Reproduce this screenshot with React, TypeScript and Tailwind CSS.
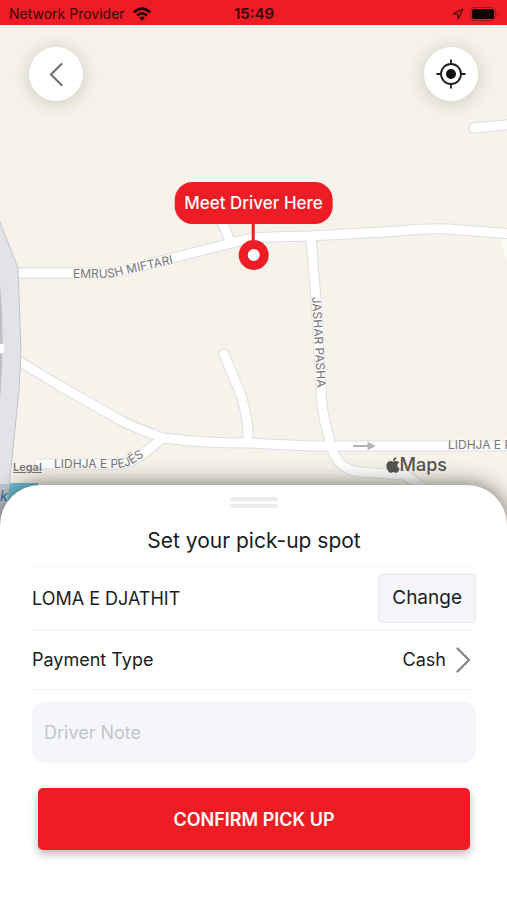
import type React from "react";
import { FaApple } from "react-icons/fa";

interface Road {
  id: string;
  d: string;
}

interface RoundButtonProps {
  label: string;
  children: React.ReactNode;
}

const roads: Road[] = [
  { id: "emrush", d: "M10 273H105Q114 273 122 271L200 251L232 243Q250 237 270 237L310 236L400 231Q437 227 460 230L515 234" },
  { id: "emrush-stub", d: "M221 220L231 243" },
  { id: "jashar", d: "M311 237L316 300L321 385Q321 410 327 430L331 446Q338 470 360 472L405 475L426 490" },
  { id: "west", d: "M10 356L60 386L120 420Q128 425 163 438Q200 443 250 443L310 446H515" },
  { id: "lidhja", d: "M163 438L139 457Q130 464 112 464H36" },
  { id: "dead-end", d: "M224 354L241 395Q249 420 248 441" },
  { id: "north-east", d: "M474 128L515 124" },
];

const StreetMap: React.FC = () => (
  <svg
    className="absolute inset-0 h-full w-full"
    viewBox="0 25 507 500"
    preserveAspectRatio="xMidYMid slice"
    aria-label="Map"
  >
    <rect x="-300" y="-200" width="1200" height="1000" fill="#f7f3eb" />
    <path d="M504 238L512 268" stroke="#fcfaf6" strokeWidth="7" />

    {/* river */}
    <path d="M0 483H38V525H0Z" fill="#6cc3dc" />

    {/* road casing first, then the white fill over it */}
    <g fill="none" stroke="#dddee1" strokeWidth="11" strokeLinejoin="round">
      {roads.map((road) => (
        <path
          key={road.id}
          d={road.d}
          strokeLinecap={road.id === "dead-end" || road.id === "north-east" ? "round" : "butt"}
        />
      ))}
    </g>
    <g fill="none" stroke="#fff" strokeWidth="9" strokeLinejoin="round">
      {roads.map((road) => (
        <path
          key={road.id}
          d={road.d}
          strokeLinecap={road.id === "dead-end" || road.id === "north-east" ? "round" : "butt"}
        />
      ))}
    </g>

    {/* motorway */}
    <path d="M-4 214L0 222L18 268L21 350L19 390L9 487L4 525H-4Z" fill="#e2e3e8" stroke="#c3c4c9" />
    <path d="M0 284Q5 335 0 402Z" fill="#bfc0c5" />
    <path d="M-4 348L4 349" stroke="#fff" strokeWidth="9" />
    <path d="M9 484L4 525H-4V484Z" fill="#c2c8d3" />

    <g fill="#b2b2b2" stroke="#b2b2b2">
      <path d="M353 446H369" strokeWidth="2" />
      <path d="M368 442.500L375 446L368 449.500Z" strokeWidth="1" />
    </g>

    <defs>
      <path id="label-emrush" d="M73 278H98Q112 278 122 275L190 260" />
      <path id="label-jashar" d="M312 297L318 400" />
      <path id="label-lidhja" d="M54 468H116Q126 468 134 463L165 443" />
    </defs>
    <g
      className="font-['Inter',sans-serif] text-[12px]"
      fill="#77777a"
      stroke="#fbf9f5"
      strokeWidth="2"
      paintOrder="stroke"
    >
      <text>
        <textPath href="#label-emrush">EMRUSH MIFTARI</textPath>
      </text>
      <text>
        <textPath href="#label-jashar">JASHAR PASHA</textPath>
      </text>
      <text>
        <textPath href="#label-lidhja">LIDHJA E PEJËS</textPath>
      </text>
      <text x="448" y="449">
        LIDHJA E P
      </text>
    </g>
    <text x="0" y="501" className="font-['Inter',sans-serif] text-[14px] italic" fill="#2a6cb0">
      k
    </text>
  </svg>
);

const StatusBar: React.FC = () => (
  <header className="grid h-[25px] grid-cols-3 items-center bg-[#ee1c25] pt-[2px] pr-2 pl-[9px] text-[14px] leading-5 text-[#3a0507]">
    <div className="flex items-center gap-2 whitespace-nowrap">
      <span>Network Provider</span>
      <svg className="h-[14px] w-[18px] shrink-0" viewBox="0 0 18 14" aria-hidden="true">
        <g fill="none" stroke="#1c0203" strokeWidth="2.600">
          <path d="M1 5.200Q9 -2 17 5.200" />
          <path d="M4 8.500Q9 4 14 8.500" />
        </g>
        <path d="M6.200 10.800Q9 8.400 11.800 10.800L9 13.700Z" fill="#1c0203" />
      </svg>
    </div>
    <span className="text-center text-[15px] font-semibold">15:49</span>
    <div className="flex items-center justify-end gap-[6px]">
      <svg className="h-3 w-3" viewBox="0 0 12 12" aria-hidden="true">
        <path
          d="M10.800 1.200L1.200 5.800L5.600 6.400L6.300 10.800Z"
          fill="none"
          stroke="#5a0a0d"
          strokeWidth="1.400"
          strokeLinejoin="round"
        />
      </svg>
      <svg className="h-[14px] w-[29px]" viewBox="0 0 29 14" aria-hidden="true">
        <rect x="0.500" y="0.500" width="25" height="13" rx="4" fill="none" stroke="#a3141a" />
        <rect x="2" y="2" width="22" height="10" rx="2.500" fill="#0c0000" />
        <path d="M27 5Q29 7 27 9Z" fill="#a3141a" />
      </svg>
    </div>
  </header>
);

const RoundButton: React.FC<RoundButtonProps> = ({ label, children }) => (
  <button
    type="button"
    aria-label={label}
    className="flex h-[54px] w-[54px] items-center justify-center rounded-full bg-white shadow-[0_2px_20px_rgba(80,90,60,0.28)]"
  >
    {children}
  </button>
);

const Marker: React.FC = () => (
  <div className="absolute top-[157px] left-1/2 flex -translate-x-1/2 flex-col items-center">
    <div className="flex h-[42px] items-center rounded-[18px] bg-[#ee1c25] px-[10px] pt-[2px] text-[17px] font-medium whitespace-nowrap text-white">
      Meet Driver Here
    </div>
    <div className="h-4 w-[3px] bg-[#ee1c25]" />
    <div className="h-[30px] w-[30px] rounded-full border-[9px] border-[#ee1c25] bg-white" />
  </div>
);

export default function App() {
  return (
    <main className="flex min-h-screen flex-col bg-white font-['Inter','Liberation_Sans',sans-serif] text-[#1c1c1e]">
      <StatusBar />

      <section className="relative h-[500px] overflow-hidden">
        <StreetMap />
        <div className="relative flex justify-between px-[29px] pt-[22px]">
          <RoundButton label="Back">
            <svg className="h-6 w-4" viewBox="0 0 16 24" fill="none" aria-hidden="true">
              <path d="M13.500 2L3 12.500L13.500 23" stroke="#6b6b6b" strokeWidth="2" strokeLinecap="round" />
            </svg>
          </RoundButton>
          <RoundButton label="My location">
            <svg className="h-[30px] w-[30px]" viewBox="0 0 30 30" fill="none" aria-hidden="true">
              <circle cx="15" cy="15" r="10" stroke="#1c1c1e" strokeWidth="1.800" />
              <circle cx="15" cy="15" r="5" fill="#111" />
              <path d="M15 .5V5.500M15 24.500V29.500M.5 15H5.500M24.500 15H29.500" stroke="#1c1c1e" strokeWidth="1.800" />
            </svg>
          </RoundButton>
        </div>
        <Marker />
        <a
          href="#legal"
          className="absolute bottom-[50px] left-[13px] text-[11px] leading-4 font-semibold text-[#77777a] underline"
        >
          Legal
        </a>
        <div className="absolute right-[60px] bottom-[48px] flex items-center text-[18px] leading-6 font-medium text-[#55544f]">
          <FaApple className="h-[18px] w-[14px]" aria-hidden="true" />
          <span>Maps</span>
        </div>
      </section>

      <section className="relative -mt-10 flex grow flex-col rounded-t-[40px] bg-white pt-3 pr-[31px] pb-12 pl-8 shadow-[0_0_22px_rgba(40,40,30,0.7)]">
        <div className="flex flex-col items-center gap-[3px]">
          <div className="h-1 w-12 rounded-full bg-[#ececec]" />
          <div className="h-1 w-12 rounded-full bg-[#ececec]" />
        </div>
        <h1 className="mt-[19px] text-center text-[21px] leading-7">Set your pick-up spot</h1>

        <div className="mt-[11px] flex h-[63px] items-center justify-between border-t border-[#f5f5f5] text-[18px]">
          <span>LOMA E DJATHIT</span>
          <button
            type="button"
            className="h-[49px] rounded-[4px] border border-[#e6e8ea] bg-[#f4f6fa] px-[13px] text-[19px]"
          >
            Change
          </button>
        </div>

        <button
          type="button"
          className="flex h-[61px] items-center justify-between border-y border-[#f3f3f3] pr-[5px] text-[18px]"
        >
          <span>Payment Type</span>
          <span className="flex items-center gap-[10px]">
            Cash
            <svg className="h-[26px] w-[15px]" viewBox="0 0 15 26" fill="none" aria-hidden="true">
              <path d="M1.500 1.500L13 13L1.500 24.500" stroke="#85858a" strokeWidth="2.200" strokeLinecap="round" />
            </svg>
          </span>
        </button>

        <input
          type="text"
          aria-label="Driver Note"
          placeholder="Driver Note"
          className="mt-3 h-[61px] rounded-[12px] bg-[#f4f6fa] px-3 text-[18px] placeholder:text-[#c3c5c9]"
        />
        <button
          type="button"
          className="mx-[6px] mt-[25px] h-[62px] rounded-[5px] bg-[#ee1c25] text-[18px] font-semibold text-white shadow-[0_4px_8px_rgba(0,0,0,0.28)]"
        >
          CONFIRM PICK UP
        </button>
      </section>
    </main>
  );
}
